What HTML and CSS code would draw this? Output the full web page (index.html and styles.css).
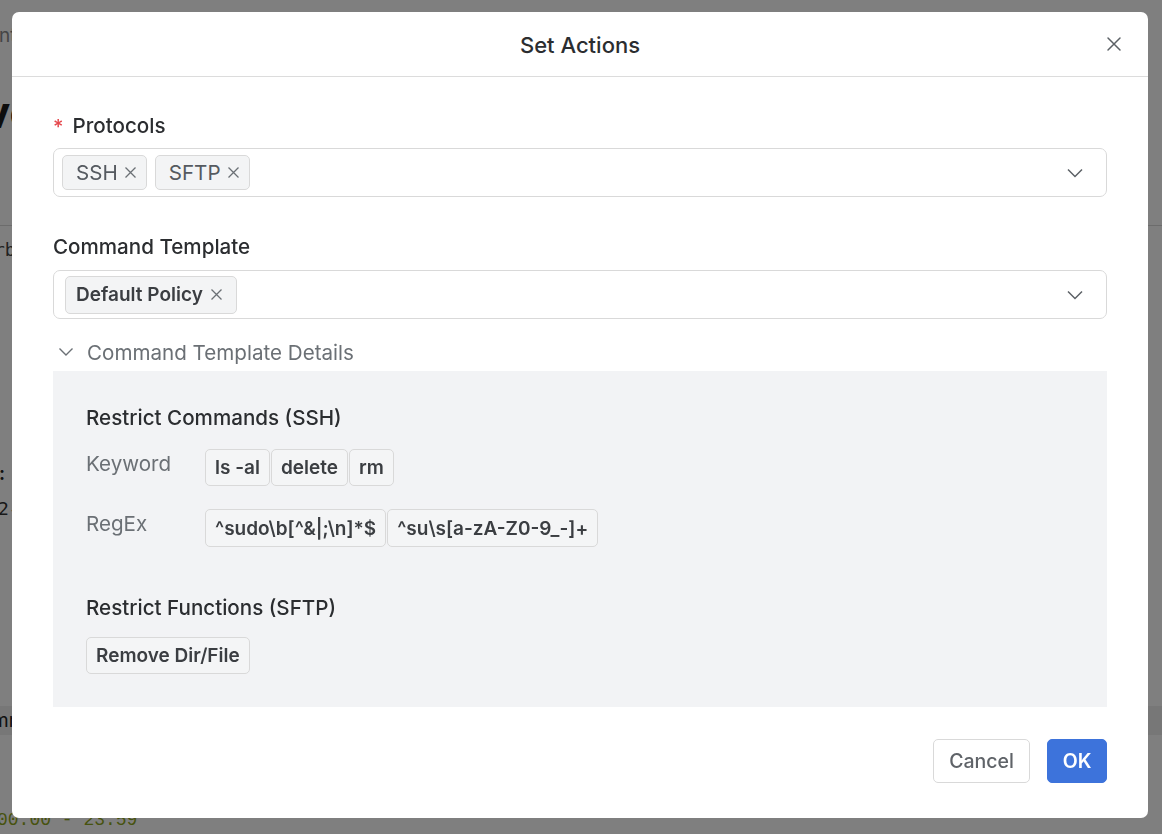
FILE: index.html
```html
<!DOCTYPE html>
<html lang="en">
<head>
<meta charset="utf-8">
<title>Set Actions</title>
<link rel="stylesheet" href="styles.css">
</head>
<body>
<div class="page">
  <div class="bg-crumb">ent</div>
  <div class="bg-title">ve</div>
  <div class="bg-rule"></div>
  <div class="bg-code">rb</div>
  <div class="bg-colon">:</div>
  <div class="bg-date">2-</div>
  <div class="bg-band"><span>mm</span></div>
  <div class="bg-time">00:00 - 23:59</div>
</div>
<div class="overlay"></div>
<div class="modal">
  <div class="modal-header">
    <span></span>
    <h2 class="modal-title">Set Actions</h2>
    <button class="icon-btn close-btn" aria-label="Close">
      <svg width="16" height="16" viewBox="0 0 16 16"><path d="M2 2L14 14M14 2L2 14" stroke="#5c6166" stroke-width="1.5" fill="none" stroke-linecap="round"/></svg>
    </button>
  </div>
  <div class="modal-body">
    <div class="field">
      <label class="field-label"><span class="req">*</span>Protocols</label>
      <div class="select">
        <div class="select-tags">
          <span class="chip">SSH<svg width="13" height="13" viewBox="0 0 13 13"><path d="M1.5 1.5L11.5 11.5M11.5 1.5L1.5 11.5" stroke="#6b7075" stroke-width="1.3" fill="none"/></svg></span>
          <span class="chip">SFTP<svg width="13" height="13" viewBox="0 0 13 13"><path d="M1.5 1.5L11.5 11.5M11.5 1.5L1.5 11.5" stroke="#6b7075" stroke-width="1.3" fill="none"/></svg></span>
        </div>
        <svg class="chev" width="16" height="10" viewBox="0 0 16 10"><path d="M1 1.5L8 8.5L15 1.5" stroke="#5c6166" stroke-width="1.5" fill="none"/></svg>
      </div>
    </div>
    <div class="field">
      <label class="field-label">Command Template</label>
      <div class="select select-lg">
        <div class="select-tags">
          <span class="chip chip-bold">Default Policy<svg width="13" height="13" viewBox="0 0 13 13"><path d="M1.5 1.5L11.5 11.5M11.5 1.5L1.5 11.5" stroke="#6b7075" stroke-width="1.3" fill="none"/></svg></span>
        </div>
        <svg class="chev" width="16" height="10" viewBox="0 0 16 10"><path d="M1 1.5L8 8.5L15 1.5" stroke="#5c6166" stroke-width="1.5" fill="none"/></svg>
      </div>
    </div>
    <div class="details-toggle">
      <svg width="16" height="10" viewBox="0 0 16 10"><path d="M1.5 1.5L8 8L14.5 1.5" stroke="#6b7075" stroke-width="1.4" fill="none"/></svg>
      <span>Command Template Details</span>
    </div>
    <div class="details">
      <h3 class="section-title">Restrict Commands (SSH)</h3>
      <div class="kv">
        <div class="kv-label">Keyword</div>
        <div class="kv-tags">
          <span class="pill">ls -al</span><span class="pill">delete</span><span class="pill">rm</span>
        </div>
      </div>
      <div class="kv">
        <div class="kv-label">RegEx</div>
        <div class="kv-tags">
          <span class="pill pill-tall">^sudo\b[^&amp;|;\n]*$</span><span class="pill pill-tall">^su\s[a-zA-Z0-9_-]+</span>
        </div>
      </div>
      <h3 class="section-title section-2">Restrict Functions (SFTP)</h3>
      <div class="kv-tags">
        <span class="pill">Remove Dir/File</span>
      </div>
    </div>
  </div>
  <div class="modal-footer">
    <button class="btn btn-default">Cancel</button>
    <button class="btn btn-primary">OK</button>
  </div>
</div>
</body>
</html>
```

FILE: styles.css
```css
* { box-sizing: border-box; }
html, body { margin: 0; padding: 0; }
body {
  width: 1162px;
  height: 834px;
  overflow: hidden;
  font-family: Inter, "Noto Sans", "Liberation Sans", sans-serif;
  color: #2b2d30;
}

/* background page (dimmed behind the dialog) */
.page {
  height: 834px;
  background: #ffffff;
  overflow: hidden;
  display: flex;
  flex-direction: column;
}
.bg-crumb {
  margin-top: 24px;
  margin-left: -12px;
  font-size: 19px;
  line-height: 24px;
  color: #8a8a8a;
}
.bg-title {
  margin-top: 38px;
  margin-left: -16px;
  font-size: 44px;
  font-weight: 700;
  line-height: 52px;
  color: #1a1a1a;
}
.bg-rule {
  margin-top: 87px;
  border-top: 1px solid #d8d8d8;
}
.bg-code {
  margin-top: 12px;
  margin-left: -6px;
  font-family: "DejaVu Sans Mono", monospace;
  font-size: 18px;
  line-height: 24px;
  color: #444;
}
.bg-colon {
  margin-top: 200px;
  margin-left: -1px;
  font-size: 19px;
  line-height: 24px;
  font-weight: 600;
  color: #222;
}
.bg-date {
  margin-top: 11px;
  margin-left: -2px;
  font-family: "DejaVu Sans Mono", monospace;
  font-size: 18px;
  line-height: 24px;
  color: #333;
}
.bg-band {
  margin-top: 185px;
  height: 29px;
  background: #eeeeee;
  font-size: 19px;
  line-height: 29px;
  color: #222;
  padding-left: 0;
  text-indent: -8px;
}
.bg-time {
  margin-top: 73px;
  margin-left: -3px;
  font-family: "Liberation Mono", monospace;
  font-size: 18px;
  line-height: 24px;
  color: #8fa61c;
}

.overlay {
  position: fixed;
  inset: 0;
  background: rgba(0, 0, 0, 0.5);
}

/* modal */
.modal {
  position: fixed;
  left: 12px;
  top: 12px;
  width: 1136px;
  height: 806px;
  background: #ffffff;
  border-radius: 7px;
  display: flex;
  flex-direction: column;
}
.modal-header {
  height: 65px;
  border-bottom: 1px solid #dcdcdc;
  display: grid;
  grid-template-columns: 1fr auto 1fr;
  align-items: center;
}
.modal-title {
  margin: 0;
  font-size: 22px;
  font-weight: 500;
  color: #2b2d30;
  line-height: 26px;
  padding-top: 1px;
}
.icon-btn {
  border: none;
  background: none;
  padding: 0;
  cursor: pointer;
  display: flex;
}
.close-btn {
  justify-self: end;
  margin-right: 26px;
}

.modal-body {
  padding: 36px 41px 0 41px;
  display: flex;
  flex-direction: column;
}
.field { display: flex; flex-direction: column; }
.field + .field { margin-top: 38px; }
.field-label {
  font-size: 20.6px;
  line-height: 24px;
  font-weight: 500;
  color: #2b2d30;
  margin-bottom: 11px;
  display: flex;
  align-items: center;
}
.field:first-child .field-label { margin-bottom: 9px; }
.req {
  color: #e5484d;
  margin-right: 9px;
  font-size: 20px;
  padding-top: 2px;
}
.select {
  height: 49px;
  border: 1px solid #d9d9d9;
  border-radius: 7px;
  display: flex;
  align-items: center;
  justify-content: space-between;
  padding: 0 23px 0 8px;
}
.select-lg { padding-left: 11px; }
.select-tags { display: flex; gap: 8px; align-items: center; }
.chip {
  height: 35px;
  display: inline-flex;
  align-items: center;
  gap: 6px;
  padding: 0 9px 0 13px;
  background: #f3f4f5;
  border: 1px solid #d9d9d9;
  border-radius: 5px;
  font-size: 20.6px;
  color: #555a60;
}
.chip-bold {
  height: 38px;
  font-size: 19px;
  font-weight: 600;
  color: #3b3e42;
  padding: 0 13px 0 10px;
  gap: 7px;
}
.chev { flex: none; }

.details-toggle {
  margin-top: 21px;
  height: 24px;
  display: flex;
  align-items: center;
  gap: 13px;
  padding-left: 5px;
  font-size: 20.6px;
  color: #6b7075;
}
.details {
  margin-top: 7px;
  background: #f2f3f5;
  padding: 35px 33px 33px 33px;
  display: flex;
  flex-direction: column;
}
.section-title {
  margin: 0;
  font-size: 20.6px;
  line-height: 24px;
  font-weight: 500;
  color: #2b2d30;
}
.section-2 { margin-top: 49px; margin-bottom: 17px; }
.kv {
  display: flex;
  align-items: flex-start;
  margin-top: 19px;
}
.kv + .kv { margin-top: 23px; }
.kv-label {
  width: 119px;
  flex: none;
  font-size: 20.6px;
  line-height: 24px;
  color: #6b7075;
  padding-top: 3px;
}
.kv-tags { display: flex; gap: 1px; }
.pill {
  height: 37px;
  display: inline-flex;
  align-items: center;
  padding: 0 9px;
  background: #f4f5f6;
  border: 1px solid #d9d9d9;
  border-radius: 5px;
  font-size: 19px;
  font-weight: 600;
  color: #3b3e42;
}
.pill-tall { height: 38px; }

.modal-footer {
  margin-top: 32px;
  padding: 0 41px;
  display: flex;
  justify-content: flex-end;
  gap: 17px;
}
.btn {
  height: 44px;
  border-radius: 5px;
  font-family: inherit;
  font-size: 19.5px;
  font-weight: 500;
  padding: 0 10px;
  cursor: pointer;
}
.btn-default {
  width: 97px;
  background: #ffffff;
  border: 1px solid #d9d9d9;
  color: #5f6368;
}
.btn-primary {
  width: 60px;
  background: #3d73db;
  border: 1px solid #3d73db;
  color: #ffffff;
  font-weight: 600;
}
```
